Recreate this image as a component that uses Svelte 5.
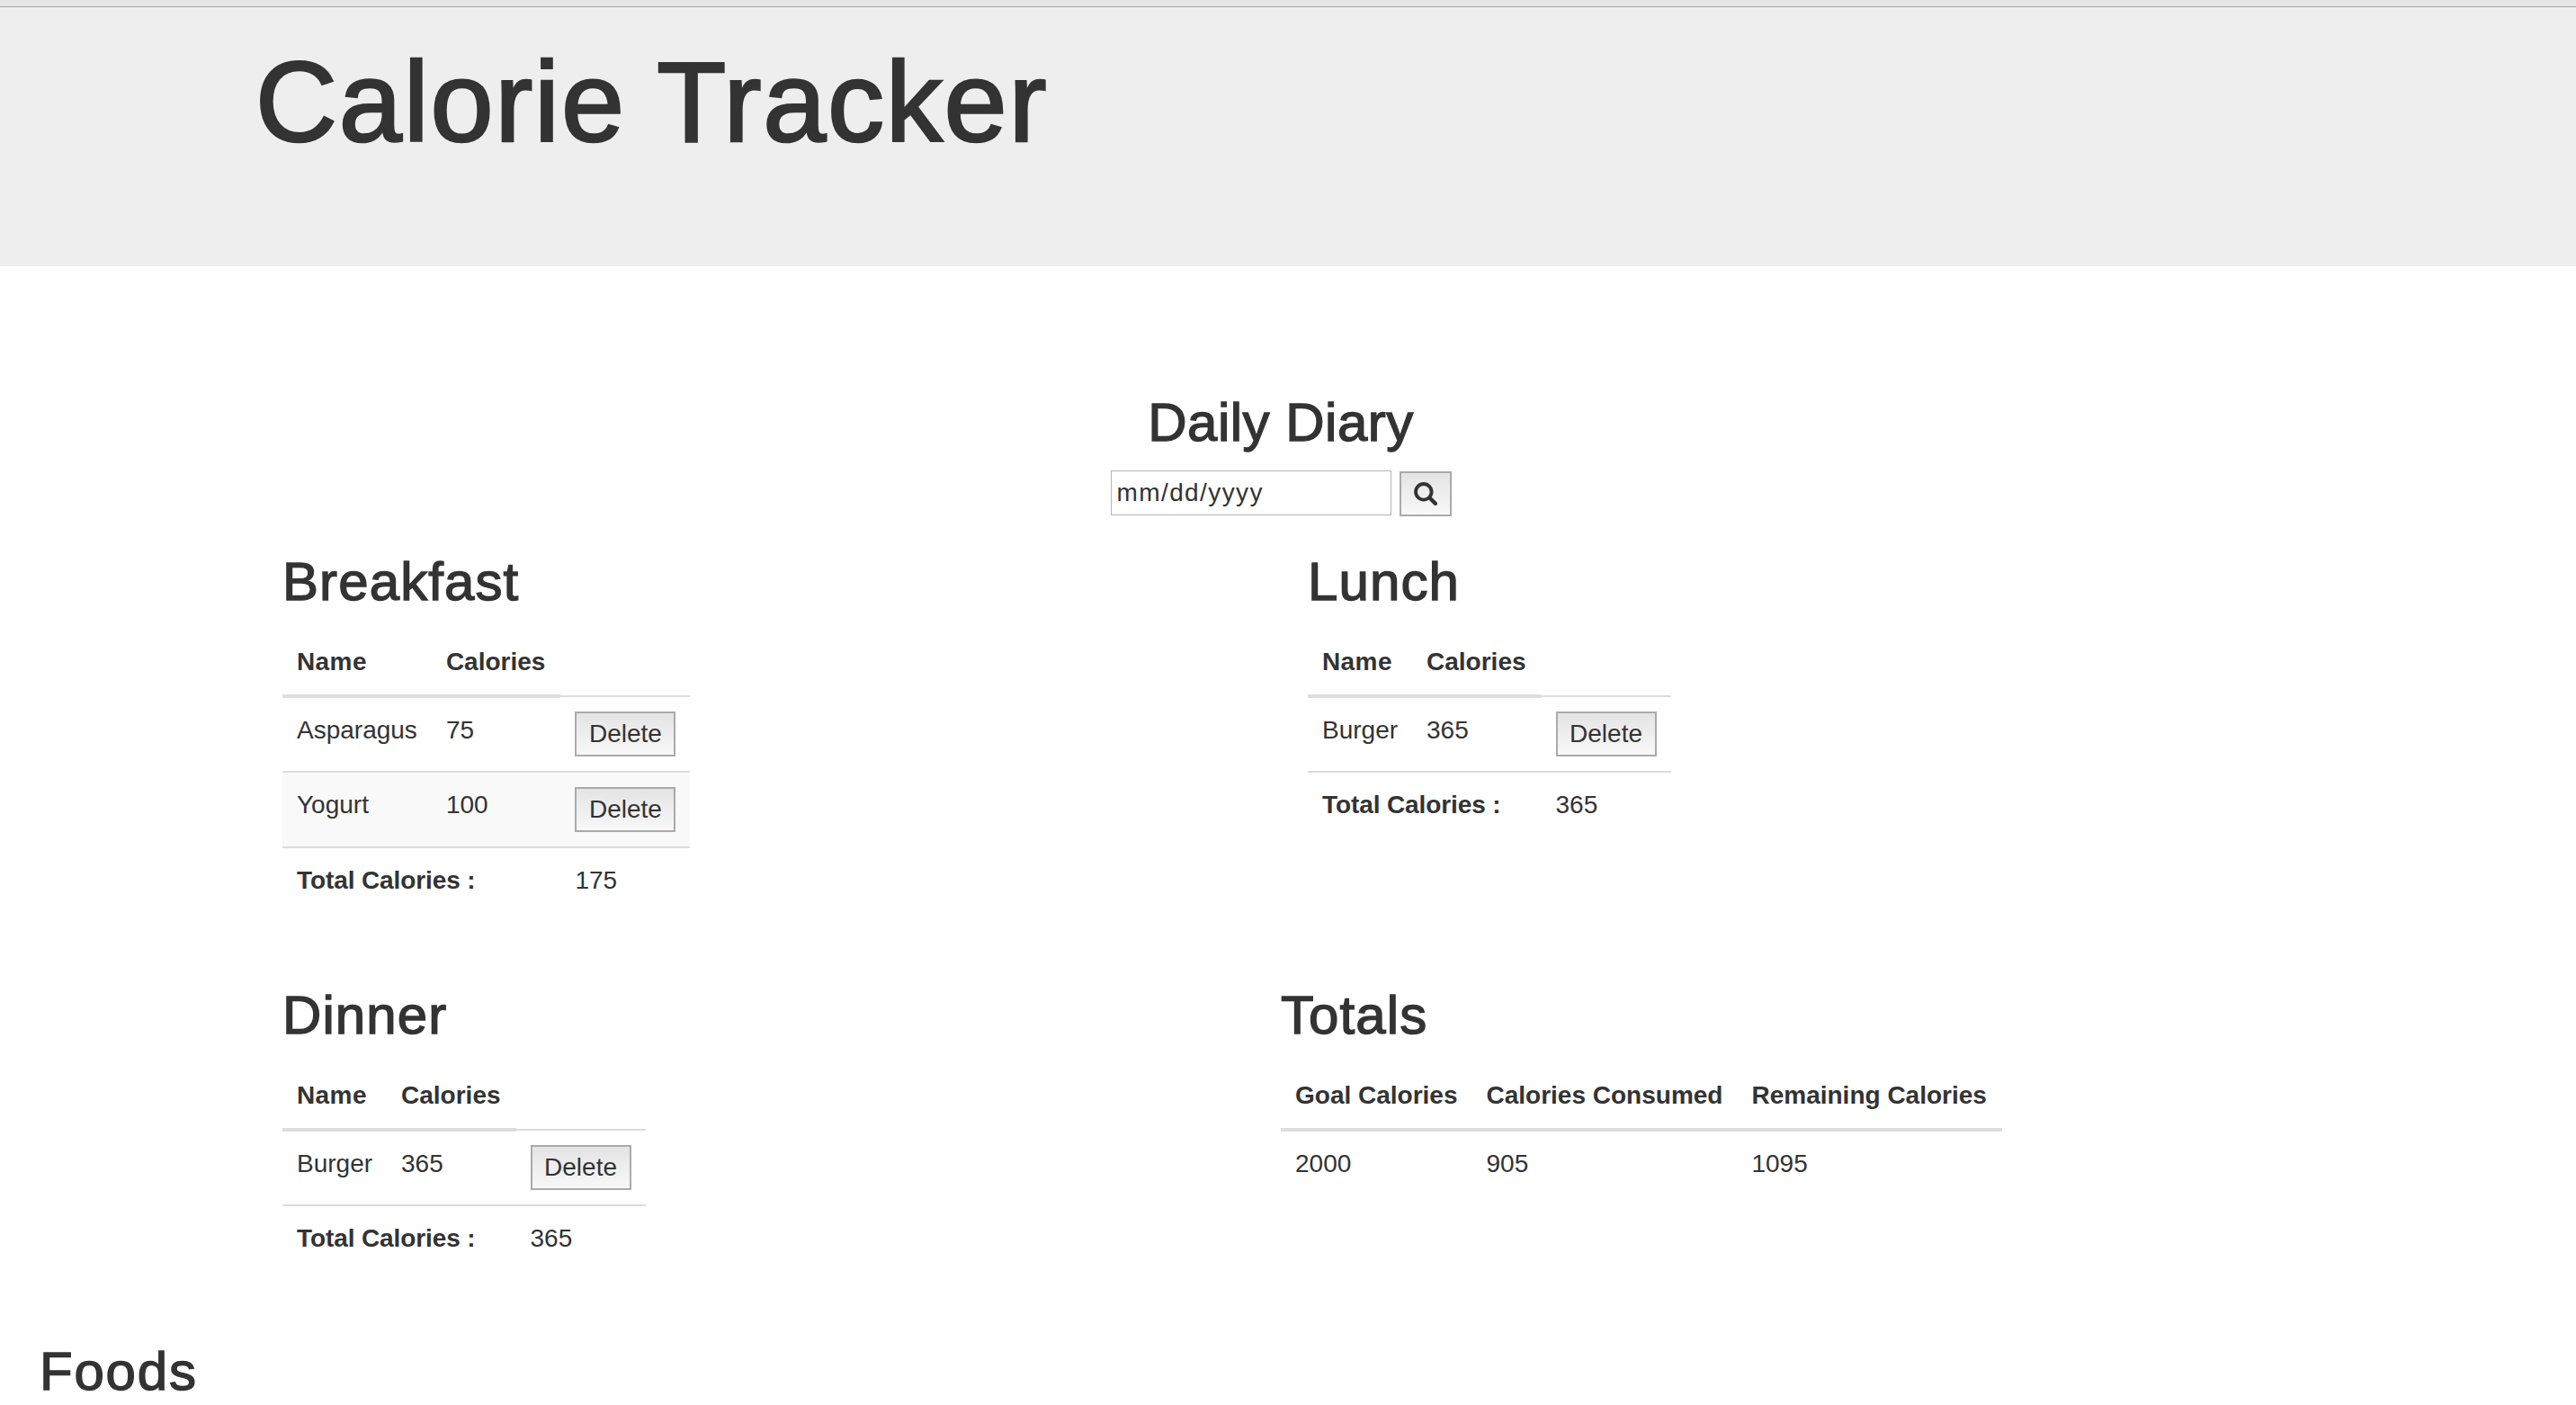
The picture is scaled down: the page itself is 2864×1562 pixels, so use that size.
<script>
  const breakfast = [
    { name: "Asparagus", calories: 75 },
    { name: "Yogurt", calories: 100 }
  ];
  const lunch = [{ name: "Burger", calories: 365 }];
  const dinner = [{ name: "Burger", calories: 365 }];
</script>

{#snippet meal(title, foods, total)}
  <h2>{title}</h2>
  <table>
    <thead>
      <tr>
        <th class="nm">Name</th>
        <th class="cal">Calories</th>
        <th class="blank"></th>
      </tr>
    </thead>
    <tbody>
      {#each foods as food}
        <tr>
          <td>{food.name}</td>
          <td>{food.calories}</td>
          <td><button class="delete">Delete</button></td>
        </tr>
      {/each}
      <tr>
        <td colspan="2"><strong>Total Calories :</strong></td>
        <td>{total}</td>
      </tr>
    </tbody>
  </table>
{/snippet}

<div class="topbar"></div>
<header class="jumbotron">
  <h1>Calorie Tracker</h1>
</header>

<main>
  <section class="diary">
    <h2>Daily Diary</h2>
    <form class="search">
      <input type="text" placeholder="mm/dd/yyyy" />
      <button type="button" class="go" aria-label="Search">
        <svg width="26" height="26" viewBox="0 0 26 26">
          <circle cx="10.8" cy="10.8" r="8.8" fill="none" stroke="#333" stroke-width="3.8" />
          <path d="M17.5 17.5l6.3 6.3" stroke="#333" stroke-width="4.4" stroke-linecap="round" />
        </svg>
      </button>
    </form>
  </section>

  <div class="row">
    <section class="col first">
      {@render meal("Breakfast", breakfast, 175)}
    </section>
    <section class="col">
      {@render meal("Lunch", lunch, 365)}
    </section>
  </div>

  <div class="row">
    <section class="col second">
      {@render meal("Dinner", dinner, 365)}
    </section>
    <section class="col">
      <h2>Totals</h2>
      <table>
        <thead>
          <tr>
            <th>Goal Calories</th>
            <th>Calories Consumed</th>
            <th class="cal">Remaining Calories</th>
          </tr>
        </thead>
        <tbody>
          <tr>
            <td>2000</td>
            <td>905</td>
            <td>1095</td>
          </tr>
        </tbody>
      </table>
    </section>
  </div>

  <section class="foods">
    <h2>Foods</h2>
  </section>
</main>

<style>
  :global(body) {
    font-family: "Liberation Sans", Arial, sans-serif;
    font-size: 28px;
    line-height: 40px;
    color: #333;
    background: #fff;
    overflow: hidden;
  }
  .topbar {
    height: 7px;
    background: #e5e5e5;
    border-bottom: 1px solid #a3a3a3;
  }
  .jumbotron {
    height: 288px;
    background: #eee;
    padding-left: 284px;
    box-sizing: border-box;
    overflow: hidden;
  }
  h1 {
    margin: 37px 0 0;
    font-size: 126px;
    font-weight: 400;
    line-height: 138px;
    letter-spacing: 1.8px;
    -webkit-text-stroke: 2.6px #333;
  }
  h2 {
    margin: 0 0 20px;
    font-size: 60px;
    font-weight: 400;
    line-height: 66px;
    letter-spacing: 1.1px;
    -webkit-text-stroke: 1.4px #333;
  }
  .diary {
    width: 2848px;
    margin-top: 141px;
    text-align: center;
  }
  .diary h2 {
    letter-spacing: 0.5px;
  }
  .search {
    display: flex;
    justify-content: center;
    align-items: flex-start;
    gap: 9px;
  }
  input {
    width: 312px;
    height: 50px;
    box-sizing: border-box;
    border: 1px solid #b4b4b4;
    padding: 0 6px;
    font: 28px "Liberation Sans", Arial, sans-serif;
    letter-spacing: 1.4px;
    color: #333;
    background: #fff;
  }
  input::placeholder {
    color: #333;
    opacity: 1;
  }
  button {
    box-sizing: border-box;
    height: 50px;
    border: 2px solid #aaa;
    background: linear-gradient(#e4e4e4, #f8f8f8);
    font: 28px "Liberation Sans", Arial, sans-serif;
    color: #333;
    padding: 0;
    border-radius: 0;
  }
  .go {
    width: 58px;
    margin-top: 1px;
    display: flex;
    align-items: center;
    justify-content: center;
  }
  .delete {
    display: block;
    width: 112px;
  }
  .row {
    display: flex;
    margin-top: 40px;
    padding-left: 314px;
  }
  .col.first {
    width: 1140px;
  }
  .col.second {
    width: 1110px;
  }
  table {
    border-collapse: collapse;
    margin-bottom: 41px;
  }
  th {
    padding: 16px;
    text-align: left;
    vertical-align: bottom;
    border-bottom: 4px solid #ddd;
  }
  th.nm {
    letter-spacing: 0.4px;
  }
  th.cal {
    padding-right: 17px;
  }
  th.blank {
    border-bottom-width: 2px;
  }
  td {
    padding: 16px;
    vertical-align: top;
    border-top: 2px solid #ddd;
  }
  td strong {
    letter-spacing: -0.1px;
  }
  tbody tr:nth-child(2):not(:last-child) {
    background: #f9f9f9;
  }
  .foods {
    margin-top: 38px;
    padding-left: 44px;
  }
  .foods h2 {
    letter-spacing: 1.8px;
  }
</style>
